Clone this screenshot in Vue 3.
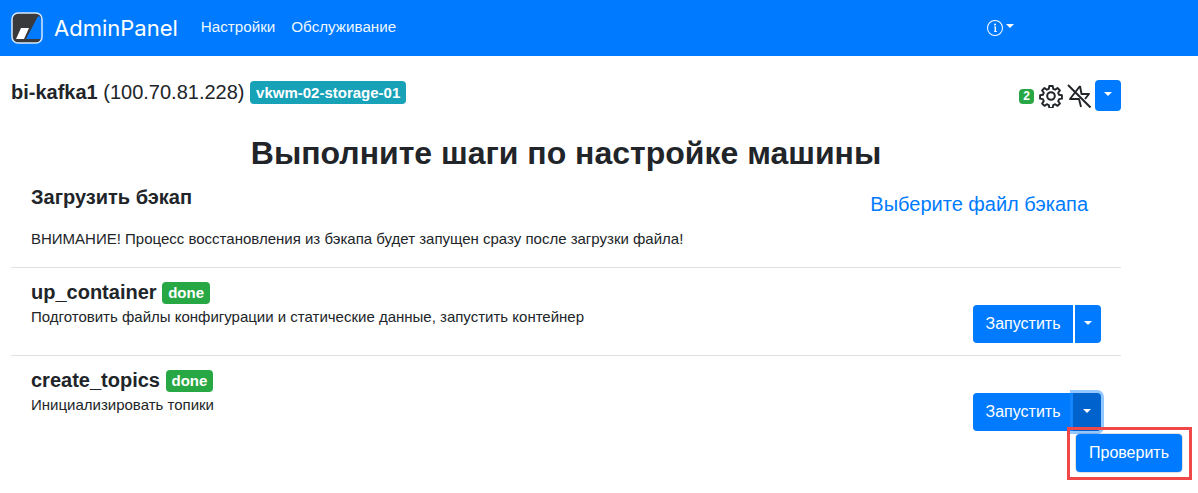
<script setup>
const steps = [
  { name: 'up_container', text: 'Подготовить файлы конфигурации и статические данные, запустить контейнер', open: false },
  { name: 'create_topics', text: 'Инициализировать топики', open: true },
]
</script>

<template>
  <div class="page">
    <nav class="navbar">
      <a class="brand">
        <svg class="logo" width="32" height="32" viewBox="0 0 32 32">
          <rect x="1" y="1" width="30" height="30" rx="6" fill="#3a3a3c" />
          <path d="M28 4 Q31 6 31 10 L31 27 L15 27 L25 8 Q26 5 28 4 Z" fill="#007bff" />
          <path d="M10 16 L18 16 L13 27 L5 27 Z" fill="#fff" />
          <rect x="1" y="1" width="30" height="30" rx="6" fill="none" stroke="#d6e9ff" stroke-width="1.5" />
        </svg>
        <span>AdminPanel</span>
      </a>
      <a class="nav-link">Настройки</a>
      <a class="nav-link">Обслуживание</a>
      <div class="nav-right">
        <svg width="16" height="16" viewBox="0 0 16 16" fill="#fff">
          <path d="M8 15A7 7 0 1 1 8 1a7 7 0 0 1 0 14zm0 1A8 8 0 1 0 8 0a8 8 0 0 0 0 16z" />
          <path d="M9 6.6H7v.7h.6v4H7v.7h3v-.7h-1zM9 4.5a1 1 0 1 1-2 0 1 1 0 0 1 2 0z" />
        </svg>
        <i class="caret"></i>
      </div>
    </nav>

    <main class="content">
      <div class="host-row">
        <div class="host">
          <b>bi-kafka1</b> (100.70.81.228)
          <span class="badge info">vkwm-02-storage-01</span>
        </div>
        <div class="host-tools">
          <span class="badge count">2</span>
          <svg class="gear" width="24" height="24" viewBox="0 0 24 24" fill="none" stroke="#212529" stroke-width="2" stroke-linejoin="round">
            <path d="M10.2 1.5h3.6l.5 3 2.1.9 2.5-1.8 2.5 2.5-1.8 2.5.9 2.1 3 .5v3.6l-3 .5-.9 2.1 1.8 2.5-2.5 2.5-2.5-1.8-2.1.9-.5 3h-3.6l-.5-3-2.1-.9-2.5 1.8-2.5-2.5 1.8-2.5-.9-2.1-3-.5v-3.6l3-.5.9-2.1-1.8-2.5 2.5-2.5 2.5 1.8 2.1-.9z" transform="translate(.6 .6) scale(.95)" />
            <circle cx="12" cy="12" r="3.8" />
          </svg>
          <svg width="24" height="24" viewBox="0 0 24 24" fill="none" stroke="#212529" stroke-width="1.9" stroke-linejoin="round">
            <path d="M13 2 L3 15 H12 L14 23 M13 2 L14.5 10 H22 L18 15" />
            <path d="M1 1 L23.5 23.5" stroke-width="2" />
          </svg>
          <button class="btn tool-btn"><i class="caret"></i></button>
        </div>
      </div>

      <h2 class="title">Выполните шаги по настройке машины</h2>

      <section class="backup">
        <div class="backup-top">
          <h5>Загрузить бэкап</h5>
          <a class="file-link">Выберите файл бэкапа</a>
        </div>
        <p>ВНИМАНИЕ! Процесс восстановления из бэкапа будет запущен сразу после загрузки файла!</p>
      </section>

      <section v-for="step in steps" :key="step.name" class="step">
        <div class="step-info">
          <h5>{{ step.name }} <span class="badge done">done</span></h5>
          <p>{{ step.text }}</p>
        </div>
        <div class="btn-group">
          <button class="btn run">Запустить</button>
          <button class="btn split" :class="{ active: step.open }"><i class="caret"></i></button>
          <div v-if="step.open" class="menu">
            <button class="btn check">Проверить</button>
          </div>
        </div>
      </section>
    </main>
  </div>
</template>

<style>
body {
  margin: 0;
  background: #fff;
}
</style>

<style scoped>
.page {
  width: 1198px;
  height: 493px;
  overflow: hidden;
  font-family: "Liberation Sans", Arial, sans-serif;
  font-size: 15px;
  line-height: 1.5;
  color: #212529;
}

.navbar {
  height: 56px;
  box-sizing: border-box;
  background: #007bff;
  display: flex;
  align-items: center;
  padding: 0 0 0 11px;
  color: #fff;
}

.brand {
  display: flex;
  align-items: center;
  gap: 11px;
  font-family: Inter, "Liberation Sans", sans-serif;
  font-size: 22px;
  margin-right: 15px;
}

.nav-link {
  color: rgba(255, 255, 255, 0.95);
  margin: 0 8px;
  font-size: 15.2px;
  margin-top: -2px;
}

.nav-right {
  display: flex;
  align-items: center;
  gap: 3px;
  margin-left: 583px;
}

.caret {
  display: inline-block;
  width: 0;
  height: 0;
  border-top: 4px solid #fff;
  border-left: 4px solid transparent;
  border-right: 4px solid transparent;
}

.nav-right .caret {
  margin-bottom: 5px;
}

.content {
  width: 1110px;
  margin-left: 11px;
}

.host-row {
  display: flex;
  justify-content: space-between;
  align-items: center;
  margin-top: 24px;
  height: 31px;
}

.host {
  font-size: 20px;
  line-height: 24px;
  margin-top: -7px;
}

.badge {
  display: inline-block;
  color: #fff;
  font-weight: 700;
  border-radius: 4px;
  line-height: 1;
  vertical-align: 1px;
}

.badge.info {
  background: #17a2b8;
  font-size: 15px;
  padding: 4px 6px 4px;
}

.host-tools {
  display: flex;
  align-items: center;
  gap: 4px;
}

.badge.count {
  background: #28a745;
  font-size: 12px;
  padding: 1px 4px 2px;
  margin-right: 1px;
  margin-top: 1px;
}

.btn {
  border: none;
  background: #007bff;
  color: #fff;
  font-family: inherit;
  font-size: 16px;
  border-radius: 4px;
  padding: 0;
  display: flex;
  align-items: center;
  justify-content: center;
}

.btn .caret {
  margin-bottom: 3px;
}

.tool-btn {
  width: 26px;
  height: 31px;
}

.title {
  font-size: 32px;
  line-height: 38px;
  font-weight: 700;
  text-align: center;
  margin: 23px 0 0;
}

.backup {
  padding: 15px 20px 0;
  height: 80px;
  border-bottom: 1px solid #dee2e6;
}

.backup-top {
  display: flex;
  justify-content: space-between;
}

h5 {
  margin: 0;
  font-size: 20px;
  line-height: 21px;
  font-weight: 700;
}

.file-link {
  color: #007bff;
  font-size: 20px;
  line-height: 26px;
  margin: 4px 13px 0 0;
}

.backup p {
  margin: 12px 0 0;
  font-size: 15px;
  line-height: 20px;
}

.step {
  height: 87px;
  padding: 0 20px;
  display: flex;
  justify-content: space-between;
  border-bottom: 1px solid #dee2e6;
}

.step:last-child {
  border-bottom: none;
}

.step-info {
  padding-top: 12px;
}

.step-info h5 {
  line-height: 24px;
}

.step-info p {
  margin: 3px 0 0;
  font-size: 15px;
  line-height: 20px;
}

.badge.done {
  background: #28a745;
  font-size: 15px;
  padding: 3px 6px 4px;
}

.btn-group {
  position: relative;
  display: flex;
  height: 38px;
  margin-top: 37px;
  align-self: flex-start;
}

.run {
  width: 100px;
  height: 38px;
  border-radius: 4px 0 0 4px;
}

.split {
  width: 28px;
  height: 38px;
  border-radius: 0 4px 4px 0;
  border-left: 2px solid #fff;
}

.split.active {
  background: #0062cc;
  border-left: none;
  box-shadow: 0 0 0 3px rgba(38, 143, 255, 0.5);
  position: relative;
}

.menu {
  position: absolute;
  top: 40px;
  left: 102px;
  padding: 1px;
}

.menu::after {
  content: "";
  position: absolute;
  inset: -6px -9px -7px -8px;
  border: 3px solid #f04848;
}

.check {
  width: 106px;
  height: 38px;
  box-shadow: 0 0 0 1px rgba(0, 0, 0, 0.12);
}
</style>
